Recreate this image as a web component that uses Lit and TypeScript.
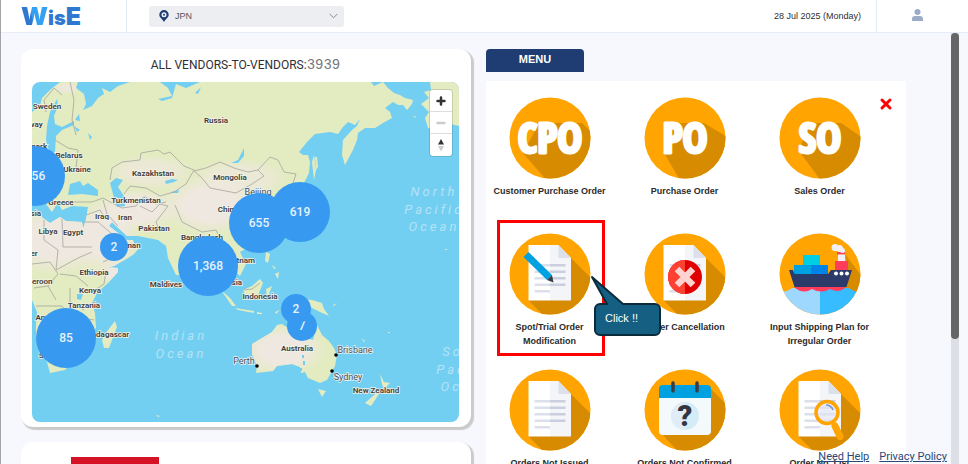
import { LitElement, html, css, svg } from "lit";
import { customElement, property } from "lit/decorators.js";

type Label = [string, number, number];

const COUNTRIES: Label[] = [
  ["Sweden", 47, 109], ["Norway", 29, 127], ["Denmark", 31, 149], ["Belarus", 69, 158],
  ["Ukraine", 77, 172], ["Greece", 61, 205], ["Tunisia", 28, 216], ["Libya", 48, 234],
  ["Egypt", 73, 235], ["Niger", 28, 256], ["Iraq", 102, 219], ["Iran", 125, 220],
  ["Pakistan", 154, 231], ["Oman", 130, 248], ["Turkmenistan", 136, 203], ["Kazakhstan", 153, 176],
  ["Russia", 216, 123], ["Mongolia", 230, 180], ["China", 228, 212], ["Bangladesh", 202, 240],
  ["Vietnam", 240, 263], ["Malaysia", 226, 285], ["Maldives", 166, 287], ["Indonesia", 260, 299],
  ["Ethiopia", 94, 275], ["Cameroon", 34, 284], ["Kenya", 90, 293], ["Tanzania", 84, 308],
  ["Angola", 48, 320], ["Madagascar", 107, 337], ["South Africa", 61, 358],
  ["Australia", 297, 351], ["New Zealand", 376, 393],
];

const CITIES: Label[] = [
  ["Beijing", 258, 195], ["Brisbane", 355, 353], ["Sydney", 348, 380], ["Perth", 244, 364],
];

const OCEANS: Label[] = [
  ["North", 434, 196], ["Pacific", 434, 214], ["Ocean", 434, 231],
  ["Indian", 181, 340], ["Ocean", 181, 358],
  ["South", 466, 356], ["Pacific", 466, 374], ["Ocean", 466, 391],
];

const CLUSTERS: [string, number, number, number][] = [
  ["156", 35, 176, 30], ["2", 114, 247, 14], ["655", 259, 223, 30], ["619", 300, 212, 30],
  ["1,368", 208, 266, 30], ["7", 302, 326, 15], ["2", 296, 309, 15], ["85", 66, 338, 30],
];

const LAND = [
  // Eurasia
  "M32 112 40 106 42 98 50 90 60 82 78 82 76 88 84 94 86 104 83 110 92 106 98 98 104 94 102 88 110 92 118 86 130 82 160 82 168 88 172 96 158 99 162 101 172 98 176 84 186 88 200 82 371 82 374 86 383 82 388 88 394 93 400 95 405 98 413 100 412 104 407 110 403 105 398 105 393 102 385 108 390 112 392 118 383 123 375 128 365 128 358 133 357 140 353 150 345 165 342 155 343 140 352 130 357 126 360 119 355 125 348 122 343 127 338 134 330 132 315 134 307 142 299 152 303 155 308 155 310 162 309 173 303 185 296 194 284 192 276 196 284 206 282 236 262 248 247 248 240 252 246 264 240 276 232 268 233 284 226 276 224 292 220 284 216 262 208 250 198 258 184 268 180 275 176 275 168 258 166 246 158 240 138 236 127 236 112 222 109 226 127 240 133 240 134 243 140 247 134 254 128 258 114 266 103 268 98 256 90 244 82 232 86 219 88 207 72 206 62 210 58 202 52 212 46 204 40 204 32 200Z",
  // Africa
  "M32 215 40 216 50 223 60 217 66 221 82 222 84 234 96 252 104 267 118 268 118 272 108 283 97 293 92 303 95 313 96 328 88 336 80 352 65 370 50 373 47 362 36 338 36 324 37 312 32 300Z",
  // Madagascar, Sakhalin
  "M115 321 117 327 109 348 104 348 102 340 108 330Z M314 155 316 170 314 180 312 162Z",
  // Sumatra, Java, Borneo, Sulawesi, Philippines
  "M221 290 230 298 236 306 232 306Z M235 308 254 311 254 313 238 310Z M243 290 252 286 260 279 263 283 257 298 246 297Z M266 289 272 286 269 294 272 300 267 299Z M266 252 270 254 268 263 265 261Z M275 274 279 272 278 279Z",
  // New Guinea
  "M300 299 312 300 322 303 324 309 329 316 320 312 312 308Z",
  // Australia and Tasmania
  "M282 324 288 328 296 332 305 338 313 340 317 325 322 335 329 341 334 348 337 355 335 366 327 380 320 383 308 378 305 372 301 373 300 367 292 364 277 366 273 371 256 373 257 366 252 354 252 344 262 338 272 332 277 325Z M318 389 326 391 322 397Z",
  // New Zealand
  "M380 374 384 382 390 383 384 389 382 384Z M382 389 377 397 371 406 365 403 374 395Z",
  // Alaska
  "M430 82H459V126L450 124 444 132 428 128 425 118 429 112 421 104 429 98 424 92 431 90Z",
];

const INLAND_WATER = [
  "M57 99 58 106 54 116 55 124 62 127 74 121 74 125 62 130 56 136 55 152 49 153 46 140 47 126 50 112Z",
  "M68 195 70 184 80 181 83 186 88 183 98 190 98 196 82 194Z",
  "M110 183 116 178 123 180 118 187 124 196 125 206 117 207 113 194Z",
  "M74 126 80 130 77 132Z M88 133 92 137 90 140Z M75 120 79 114 80 121Z",
  "M165 181 172 179 178 180 174 182 166 184Z M171 192 179 190 178 193 172 193Z",
  "M231 163 238 160 244 148 244 156 238 163Z M195 93 201 87 198 94Z",
  "M77 294 83 294 81 300 77 299Z",
];

const BORDERS = [
  "M46 112 44 100 54 88 62 95M70 82 74 100 72 120 76 135M55 140 68 148 78 150 76 168 92 170",
  "M110 180 112 168 122 162 140 160 141 153 158 150 164 154 170 152 184 166 194 170 186 184 174 192 160 196 146 188 130 186 124 194",
  "M194 171 206 168 220 162 234 168 248 172 258 170 264 176 252 184 236 193 210 188 202 178Z",
  "M258 170 270 157 278 160 284 172 296 174 292 186",
  "M68 202 92 202 103 198 112 203 122 208 136 206 144 196 156 204 166 202M103 200 107 214 118 226M86 215 100 210 106 220",
  "M140 206 152 212 160 204 168 206 156 222 160 232M175 205 182 222 202 232 216 230 222 242",
  "M62 219 63 247 92 247M44 220 44 240 58 250 56 270 78 258 92 252M32 264 50 262 58 274 48 286 34 288M60 274 76 276 88 286M70 288 70 302 84 310M36 306 62 306 70 316 94 320M48 286 56 300M106 270 104 284 92 292",
  "M84 222 98 222 112 234M103 262 124 252M214 252 224 262 230 258 238 268M243 290 252 289 260 283",
];

@customElement("vendor-map")
export class VendorMap extends LitElement {
  static styles = css`
    :host { display: block; position: relative; overflow: hidden; border-radius: 8px; }
    .map { display: block; width: 100%; height: auto; font-family: Roboto, "Liberation Sans", sans-serif; text-anchor: middle; }
    .sea { fill: #73cff1; }
    .land { fill: #e3ebc0; }
    .border { fill: none; stroke: #a5a49f; stroke-width: 0.8; stroke-linejoin: round; }
    .country { font-size: 8px; font-weight: 600; fill: #3c3c3c; stroke: #f2f2e6; stroke-width: 1.5; paint-order: stroke; }
    .city { font-size: 9px; font-weight: 400; fill: #4a4f52; stroke: #e6f4f8; stroke-width: 1.5; paint-order: stroke; }
    .ocean { font-size: 13px; font-style: italic; letter-spacing: 3px; fill: #b4e2f6; }
    .cluster { fill: #379af0; }
    .count { font-size: 12px; font-weight: 500; fill: #e6f2fd; }
    .controls { position: absolute; top: 8px; right: 7px; display: flex; flex-direction: column; width: 22px; border-radius: 3px; background: #fff; box-shadow: 0 0 0 1px rgba(0, 0, 0, 0.12); overflow: hidden; }
    .control { display: grid; place-items: center; height: 22px; padding: 0; border: 0; border-bottom: 1px solid #ddd; background: none; }
    .control:last-child { border-bottom: 0; }
    .glyph { display: block; width: 12px; height: 16px; }
  `;

  render() {
    return html`
      <svg class="map" viewBox="32 82 427 340" role="img" aria-label="Vendor map">
        <defs>
          <radialGradient id="dry"><stop offset="0.5" stop-color="#efe8e0" /><stop offset="1" stop-color="#efe8e0" stop-opacity="0" /></radialGradient>
          <clipPath id="shore">${LAND.map((d) => svg`<path d=${d} />`)}</clipPath>
        </defs>
        <rect class="sea" x="32" y="82" width="427" height="340" />
        ${LAND.map((d) => svg`<path class="land" d=${d} />`)}
        <g clip-path="url(#shore)" fill="url(#dry)">
          <ellipse cx="56" cy="240" rx="54" ry="36" />
          <ellipse cx="106" cy="236" rx="34" ry="40" />
          <ellipse cx="138" cy="210" rx="40" ry="22" />
          <ellipse cx="210" cy="205" rx="52" ry="30" />
          <ellipse cx="150" cy="172" rx="46" ry="18" opacity="0.7" />
          <ellipse cx="240" cy="178" rx="50" ry="20" opacity="0.7" />
          <ellipse cx="283" cy="350" rx="44" ry="26" />
          <ellipse cx="66" cy="88" rx="14" ry="6" opacity="0.8" />
          <ellipse cx="116" cy="273" rx="16" ry="12" />
        </g>
        ${INLAND_WATER.map((d) => svg`<path class="sea" d=${d} />`)}
        ${BORDERS.map((d) => svg`<path class="border" d=${d} />`)}
        <path class="sea" d="M302 355h2v3h-2ZM303 361h2v4h-2ZM300 368h2v3h-2Z" />
        <path class="land" d="M315 157h2l1 10-2 3ZM413 115l3 2-1 1ZM333 305l4-2-3 3ZM361 338l4 3-1 1ZM388 332h2v1h-2ZM156 415l4 1-2 1ZM445 249h2v1h-2ZM272 265l4 3-2 1ZM257 312l5 1v1h-5ZM275 312l5-2-4 4Z" />
        ${OCEANS.map(([t, x, y]) => svg`<text class="ocean" x=${x} y=${y}>${t}</text>`)}
        ${COUNTRIES.map(([t, x, y]) => svg`<text class="country" x=${x} y=${y}>${t}</text>`)}
        ${CITIES.map(([t, x, y]) => svg`<text class="city" x=${x} y=${y}>${t}</text>`)}
        <circle cx="336" cy="355" r="1.8" /><circle cx="332" cy="371" r="1.8" /><circle cx="257" cy="366" r="1.8" />
        ${CLUSTERS.map(([t, x, y, r]) => svg`<circle class="cluster" cx=${x} cy=${y} r=${r} /><text class="count" x=${x} y=${y + 4}>${t}</text>`)}
      </svg>
      <div class="controls">
        <button class="control" aria-label="Zoom in"><svg class="glyph" viewBox="0 0 12 16"><path d="M6 4.500v7M2.500 8h7" stroke="#333" stroke-width="2.5" stroke-linecap="round" /></svg></button>
        <button class="control" aria-label="Zoom out"><svg class="glyph" viewBox="0 0 12 16"><path d="M2.500 8h7" stroke="#ccc" stroke-width="2.5" stroke-linecap="round" /></svg></button>
        <button class="control" aria-label="Reset bearing"><svg class="glyph" viewBox="0 0 12 16"><path d="M6 2 9 7.500H3Z" fill="#333" /><path d="M6 14.500 9 9H3Z" fill="#ccc" /></svg></button>
      </div>
    `;
  }
}

const sheet = svg`
  <path fill="#d78b00" d="M62 25 100 63V100H52L19.500 67.500Z" />
  <path fill="#fff" d="M19.500 12H41V67.500H19.500Z" />
  <path fill="#f4f5f8" d="M41 12h8.500L62 25V67.500H41Z" />
  <path fill="#dbe0eb" d="M49.500 12 62 25H49.500Z" />
  <path fill="#dbe0eb" d="M25.500 31H41v2.500H25.500ZM25.500 37.500H41V40H25.500ZM25.500 44H41v2.500H25.500ZM25.500 50.500H41V53H25.500ZM25.500 57H41v2.500H25.500Z" />
  <path fill="#cacfe0" d="M41 31h15.500v2.500H41ZM41 37.500h15.500V40H41ZM41 44h15.500v2.500H41ZM41 50.500h15.500V53H41Z" />`;

const ICONS: Record<string, unknown> = {
  cpo: svg`<path fill="#d78b00" d="M30 26H73L100 53V100H52L14 56Z" /><text class="code" x="41" y="56">CPO</text>`,
  po: svg`<path fill="#d78b00" d="M22 26H60L100 50V100H46L20 56Z" /><text class="code" x="41" y="56">PO</text>`,
  so: svg`<path fill="#d78b00" d="M30 26H62L100 52V100H54L20 54Z" /><text class="code" x="41" y="56">SO</text>`,
  sheet,
  edit: svg`${sheet}
    <path fill="#00a1e0" d="M14.500 24 19.500 19 43 42 38 47Z" />
    <path fill="#3a3d45" d="M38 47 43 42 44.500 49.500Z" />`,
  cancel: svg`${sheet}
    <circle cx="41" cy="44" r="17" fill="#e00000" /><path fill="#ff4133" d="M41 27a17 17 0 0 0 0 34Z" />
    <path stroke="#ffd3d0" stroke-width="6.500" d="M33 36 49 52M49 36 33 52" />`,
  ship: svg`
    <path fill="#d78b00" d="M41 22 58 39V60H100V66L66 21 69 37H56Z" />
    <path fill="#9fd8ff" d="M0 58q7 2 13-3H41V84H0Z" /><path fill="#36bcff" d="M41 55H70q6 5 14 3V84H41Z" />
    <path fill="#ff3d5a" d="M15 54H67q-7 7-16 2-9 5-18 0-9 6-18-2Z" />
    <path fill="#00cfe3" d="M24 22H41V32H24Z" /><path fill="#00a1e0" d="M15 32H32V42H15Z" /><path fill="#0083e6" d="M32 32H49V42H32Z" />
    <path fill="#ff3d5a" d="M56 28H69V38H56ZM58 19H66v2.500H58Z" /><path fill="#f0f0f5" d="M59 21.500H66V28H59Z" />
    <path fill="#2a3b6a" d="M10 37h4l1.500 4H49l3-4H73L67.500 54H15.500Z" />
    <g fill="#f0f0f5"><circle cx="56" cy="14.500" r="3.500" /><circle cx="60.500" cy="15.500" r="3.500" /><circle cx="63.500" cy="17.500" r="2.500" /></g>
    <g fill="#fff"><circle cx="57" cy="40.500" r="2" /><circle cx="62.500" cy="40.500" r="2" /><circle cx="68" cy="40.500" r="2" /></g>`,
  calendar: svg`
    <path fill="#d78b00" d="M67 20 100 53V100H50L18 65Z" />
    <path fill="#f4f9fb" d="M15 28H67V62a4 4 0 0 1-4 4H19a4 4 0 0 1-4-4Z" />
    <path fill="#00a1e0" d="M15 29V20a4 4 0 0 1 4-4H63a4 4 0 0 1 4 4v9Z" />
    <path stroke="#3a3d45" stroke-width="3.500" stroke-linecap="round" d="M29 14v8M53 14v8" />
    <circle cx="41" cy="47" r="14" fill="#d3ecf5" /><path fill="#e0edf8" d="M41 33a14 14 0 0 0 0 28Z" />
    <text class="mark" x="41" y="57">?</text>`,
  search: svg`${sheet}
    <circle cx="48" cy="43.500" r="11" fill="#e6eaf6" fill-opacity="0.7" stroke="#ffa400" stroke-width="3.500" />
    <path d="M47 36q5 0 7 5" fill="none" stroke="#7b8fd8" stroke-width="1.500" />
    <path d="M54 54.500 55.500 57" stroke="#5f74c0" stroke-width="3" /><path d="M56 57 61 67.500" stroke="#ffa400" stroke-width="7" stroke-linecap="round" />`,
};

@customElement("menu-tile")
export class MenuTile extends LitElement {
  @property() icon = "sheet";
  @property() label = "";

  static styles = css`
    :host { display: block; }
    .tile { display: flex; flex-direction: column; align-items: center; gap: 5px; width: 100%; padding: 0; border: 0; background: none; color: #2b2b2b; font: bold 9px/14px "Liberation Sans", Arial, sans-serif; text-align: center; }
    .icon { display: block; width: 82px; height: 82px; }
    .code { font: bold 42px "Liberation Sans Narrow", "Open Sans Condensed", Roboto, sans-serif; fill: #fff; stroke: #fff; stroke-width: 3px; stroke-linejoin: round; text-anchor: middle; }
    .mark { font: 900 29px Roboto, "Liberation Sans", sans-serif; fill: #33363f; text-anchor: middle; }
  `;

  render() {
    return html`<button class="tile">
      <svg class="icon" viewBox="0 0 82 82" aria-hidden="true">
        <clipPath id="disc"><circle cx="41" cy="41" r="40.500" /></clipPath>
        <g clip-path="url(#disc)"><rect width="82" height="82" fill="#ffa400" />${ICONS[this.icon]}</g>
      </svg>
      <span>${this.label}</span>
    </button>`;
  }
}

const MENU: [string, string][] = [
  ["cpo", "Customer Purchase Order"], ["po", "Purchase Order"], ["so", "Sales Order"],
  ["edit", "Spot/Trial Order Modification"], ["cancel", "Order Cancellation"], ["ship", "Input Shipping Plan for Irregular Order"],
  ["sheet", "Orders Not Issued"], ["calendar", "Orders Not Confirmed"], ["search", "Order No. List"],
];

@customElement("app-root")
export class AppRoot extends LitElement {
  static styles = css`
    :host { display: block; color: #2f2f33; font-family: "Liberation Sans", Arial, sans-serif; }
    * { box-sizing: border-box; }
    .page { display: flex; flex-direction: column; height: 100vh; overflow: hidden; position: relative; border-left: 1px solid #a4a4a8; background: #f7f8fe; }
    .bar { display: flex; flex: none; height: 33px; background: #fff; border-bottom: 1px solid #e6edf7; }
    .brand { width: 126px; padding-left: 20px; border-right: 1px solid #e3ebf7; font: 900 25px/33px Inter, sans-serif; color: #2f78d0; }
    .brand-w { background: linear-gradient(75deg, #2f78d0 40%, #35a0f2 45%); background-clip: text; -webkit-background-clip: text; color: transparent; }
    .brand-s { font-size: 20px; }
    .country { position: relative; align-self: center; display: flex; align-items: center; width: 195px; height: 21px; margin-left: 22px; background: #edeef2; border-radius: 3px; }
    .pin { position: absolute; left: 10px; width: 10px; height: 12px; pointer-events: none; }
    .chevron { position: absolute; right: 6px; width: 9px; height: 6px; pointer-events: none; }
    .select { appearance: none; width: 100%; height: 100%; padding: 0 20px 0 26px; border: 0; background: none; color: #55565c; font: 9px "Liberation Sans", Arial, sans-serif; }
    .date { margin-left: auto; padding-right: 15px; font: 9px/33px "Liberation Sans", Arial, sans-serif; }
    .account { display: grid; place-items: center; width: 92px; padding: 0 10px 2px 0; border: 0; border-left: 1px solid #e3ebf7; background: none; }
    .user { display: block; width: 11px; height: 12px; }
    .body { display: flex; flex: 1; min-height: 0; }
    .content { display: grid; grid-template-columns: 450fr 420fr; gap: 15px; align-items: start; flex: 1; min-width: 0; overflow: hidden; padding: 16px 45px 0 20px; }
    .column { display: flex; flex-direction: column; gap: 15px; }
    .card { padding: 0 12px 5px 11px; border-radius: 12px; background: #fff; box-shadow: 2px 2px 1px 1px #cacaca; }
    .card-title { display: flex; justify-content: center; align-items: center; margin: 0; font: 400 12px/33px Roboto, "Liberation Sans", sans-serif; }
    .total { font: 14px/31px "Liberation Mono", monospace; color: #77777b; }
    .report { min-height: 120px; padding: 15px 50px; }
    .banner { width: 88px; height: 60px; background: #d61326; }
    .tab { display: block; width: 98px; height: 23px; margin: 0; border-radius: 4px 4px 0 0; background: #1f3c73; color: #fff; font: bold 11px/21px "Liberation Sans", Arial, sans-serif; text-align: center; }
    .menu { position: relative; display: grid; grid-template-columns: repeat(3, 1fr); grid-auto-rows: 118px; gap: 18px; margin-top: 9px; padding: 16px 28px 20px 5px; background: #fff; }
    .close { position: absolute; top: 16px; right: 13px; width: 14px; height: 14px; padding: 0; border: 0; background: none; }
    .close-mark { display: block; width: 14px; height: 14px; }
    .cell { position: relative; }
    .focus { position: absolute; inset: -13px 3px -5px 6px; border: 3px solid #f00; pointer-events: none; }
    .note { position: absolute; left: 98px; top: 41px; width: 74px; height: 64px; z-index: 1; }
    .note-shape { position: absolute; inset: 0; width: 74px; height: 64px; }
    .note-text { position: absolute; left: 16px; top: 37px; color: #fff; font: 11px/14px "Liberation Sans", Arial, sans-serif; white-space: nowrap; }
    .track { flex: none; width: 8px; margin-right: 9px; background: #dcdfe6; }
    .thumb { height: 71%; border-radius: 4px; background: #666; }
    .links { position: absolute; right: 21px; bottom: 0; display: flex; gap: 10px; font: 11px/15px Roboto, "Liberation Sans", sans-serif; }
    .link { color: #2a4778; }
  `;

  render() {
    return html`<div class="page">
      <header class="bar">
        <div class="brand"><span class="brand-w">W</span><span class="brand-s">is</span>E</div>
        <div class="country">
          <svg class="pin" viewBox="0 0 10 12" aria-hidden="true"><path fill="#1f3c73" fill-rule="evenodd" d="M5 0a4.700 4.700 0 0 1 4.700 4.700C9.700 7.500 6.500 9 5 12 3.500 9 .3 7.500.3 4.700A4.700 4.700 0 0 1 5 0Zm0 2.200a2.500 2.500 0 1 0 0 5 2.500 2.500 0 0 0 0-5Z" /><circle cx="5" cy="4.700" r="1" fill="#1f3c73" /></svg>
          <select class="select" aria-label="Country"><option>JPN</option></select>
          <svg class="chevron" viewBox="0 0 9 6" aria-hidden="true"><path d="M.7 1 4.500 4.800 8.300 1" fill="none" stroke="#8a8b90" /></svg>
        </div>
        <time class="date" datetime="2025-07-28">28 Jul 2025 (Monday)</time>
        <button class="account" aria-label="Account"><svg class="user" viewBox="0 0 11 12"><circle cx="5.500" cy="3" r="3" fill="#9aacc8" /><path fill="#9aacc8" d="M0 12v-2q0-3 3-3h5q3 0 3 3v2Z" /></svg></button>
      </header>
      <div class="body">
        <main class="content">
          <div class="column">
            <section class="card">
              <h2 class="card-title">ALL VENDORS-TO-VENDORS:<span class="total">3939</span></h2>
              <vendor-map></vendor-map>
            </section>
            <section class="card report"><div class="banner"></div></section>
          </div>
          <section>
            <h2 class="tab">MENU</h2>
            <nav class="menu">
              ${MENU.map(([icon, label]) => html`<div class="cell">
                <menu-tile icon=${icon} label=${label}></menu-tile>
                ${icon === "edit" ? html`
                  <div class="focus"></div>
                  <div class="note">
                    <svg class="note-shape" viewBox="0 0 74 64" aria-hidden="true"><path fill="#156082" stroke="#0b2b3b" stroke-width="2" stroke-linejoin="round" d="M3 3 34 30H66a5 5 0 0 1 5 5V56a5 5 0 0 1-5 5H11a5 5 0 0 1-5-5V35a5 5 0 0 1 5-5H18Z" /></svg>
                    <span class="note-text">Click !!</span>
                  </div>` : null}
              </div>`)}
              <button class="close" aria-label="Close menu"><svg class="close-mark" viewBox="0 0 14 14"><path d="M3 3 11 11M11 3 3 11" stroke="#f00" stroke-width="3" stroke-linecap="round" /></svg></button>
            </nav>
          </section>
        </main>
        <div class="track"><div class="thumb"></div></div>
      </div>
      <div class="links"><a class="link" href="#help">Need Help</a><a class="link" href="#privacy">Privacy Policy</a></div>
    </div>`;
  }
}
